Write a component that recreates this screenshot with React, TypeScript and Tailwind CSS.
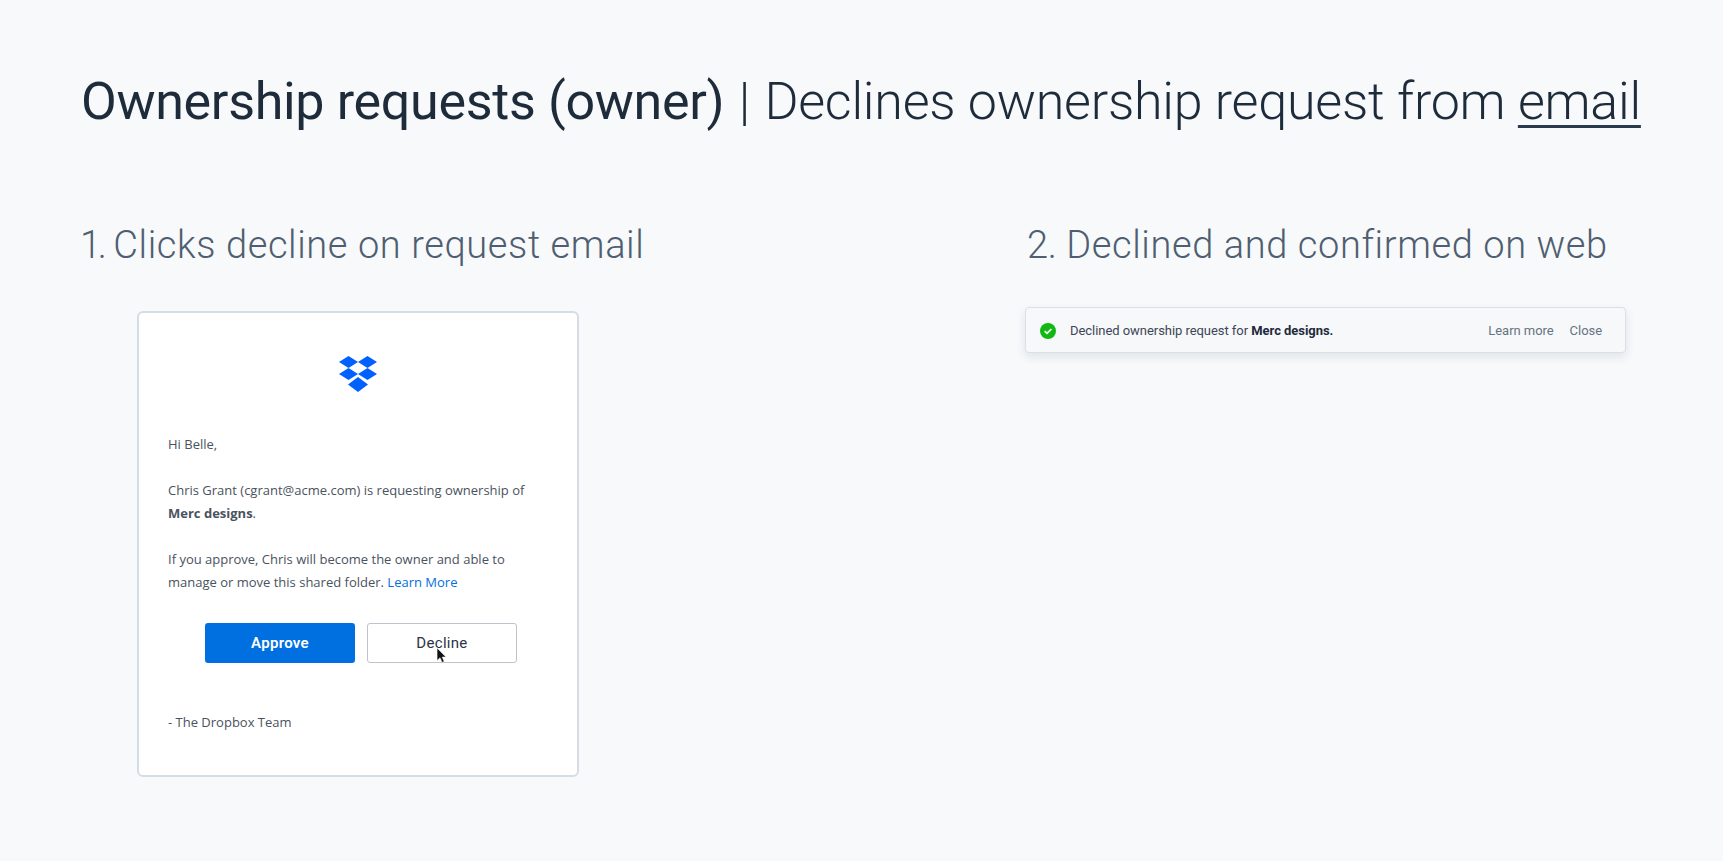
export default function App() {
  return (
    <div className="h-[861px] overflow-hidden bg-[#f7f9fb] px-[81px] pt-[69px] font-['Roboto',sans-serif]">
      <h1 className="whitespace-nowrap text-[52px] leading-[66px] font-light tracking-[-0.25px] text-[#1e2b3a]">
        <span className="font-normal tracking-[-0.32px]">Ownership requests (owner)</span>
        <span className="mx-[2px]"> | </span>Declines ownership request from{' '}
        <span className="underline decoration-[#2a3a4c] decoration-[3px] underline-offset-[6px]">email</span>
      </h1>

      <div className="mt-[86px] flex">
        {/* Email step */}
        <div className="w-[946px] shrink-0">
          <h2 className="text-[38px] leading-[48px] font-light tracking-[0.6px] text-[#4f5e70]">
            <span className="-ml-[1px] tracking-[-3.4px]">1.</span> Clicks decline on request email
          </h2>
          <div className="mt-[42px] ml-[56px] h-[466px] w-[442px] rounded-[6px] border-2 border-[#d5dce3] bg-white px-[29px] pt-[43px] font-['Open_Sans',sans-serif] text-[13px] leading-[23px] text-[#4a5260]">
            <svg viewBox="0 0 38 36" className="mx-auto block h-[36px] w-[38px]" fill="#0061fe">
              <path d="M9.5 0 0 6l9.5 6 9.5-6z" />
              <path d="M28.5 0 19 6l9.5 6L38 6z" />
              <path d="M0 18l9.5 6 9.5-6-9.5-6z" />
              <path d="M28.5 12 19 18l9.5 6 9.5-6z" />
              <path d="M9 28.5 19 21l10 7.5L19 36z" stroke="#fff" strokeWidth="1" paintOrder="stroke" />
            </svg>
            <p className="mt-[41px]">Hi Belle,</p>
            <p className="mt-[23px]">
              Chris Grant (cgrant@acme.com) is requesting ownership of
              <br />
              <b className="font-bold">Merc designs</b>.
            </p>
            <p className="mt-[23px]">
              If you approve, Chris will become the owner and able to
              <br />
              manage or move this shared folder. <span className="text-[#0070e0]">Learn More</span>
            </p>
            <div className="mt-[29px] ml-[37px] flex gap-[12px] font-['Roboto',sans-serif] text-[15px] tracking-[0.3px]">
              <button className="h-[40px] w-[150px] rounded-[3px] bg-[#0070e0] font-semibold text-white">Approve</button>
              <div className="relative">
                <button className="h-[40px] w-[150px] rounded-[3px] border border-[#bfc4cc] bg-white text-[#2a3444]">Decline</button>
                <svg viewBox="0 0 12 18" className="absolute top-[25px] left-[69px] h-[16px] w-[11px]">
                  <path d="M1 0v14l3.4-3 2.2 5.2 2.4-1-2.2-5H11z" fill="#111" stroke="#fff" strokeWidth="0.6" />
                </svg>
              </div>
            </div>
            <p className="mt-[48px]">- The Dropbox Team</p>
          </div>
        </div>

        {/* Web step */}
        <div className="min-w-0 flex-1">
          <h2 className="text-[38px] leading-[48px] font-light tracking-[0.6px] text-[#4f5e70]">
            <span className="tracking-[-0.4px]">2.</span> Declined and confirmed on web
          </h2>
          <div className="mt-[38px] -ml-[2px] flex h-[46px] w-[601px] items-center rounded-[4px] border border-[#dcdfe3] bg-[#f7f8fa] pt-[1px] pr-[23px] pl-[14px] text-[13px] tracking-[-0.05px] text-[#3c4656] shadow-[0_4px_10px_rgba(60,80,100,0.12)]">
            <svg viewBox="0 0 16 16" className="h-[16px] w-[16px] shrink-0">
              <circle cx="8" cy="8" r="8" fill="#12b812" />
              <path d="M4.6 8.2 7 10.4 11.4 6" fill="none" stroke="#fff" strokeWidth="1.7" />
            </svg>
            <span className="ml-[14px]">
              Declined ownership request for <b className="font-bold text-[#1e2b3a]">Merc designs.</b>
            </span>
            <span className="ml-auto text-[#667383]">Learn more</span>
            <span className="ml-[16px] text-[#667383]">Close</span>
          </div>
        </div>
      </div>
    </div>
  );
}
